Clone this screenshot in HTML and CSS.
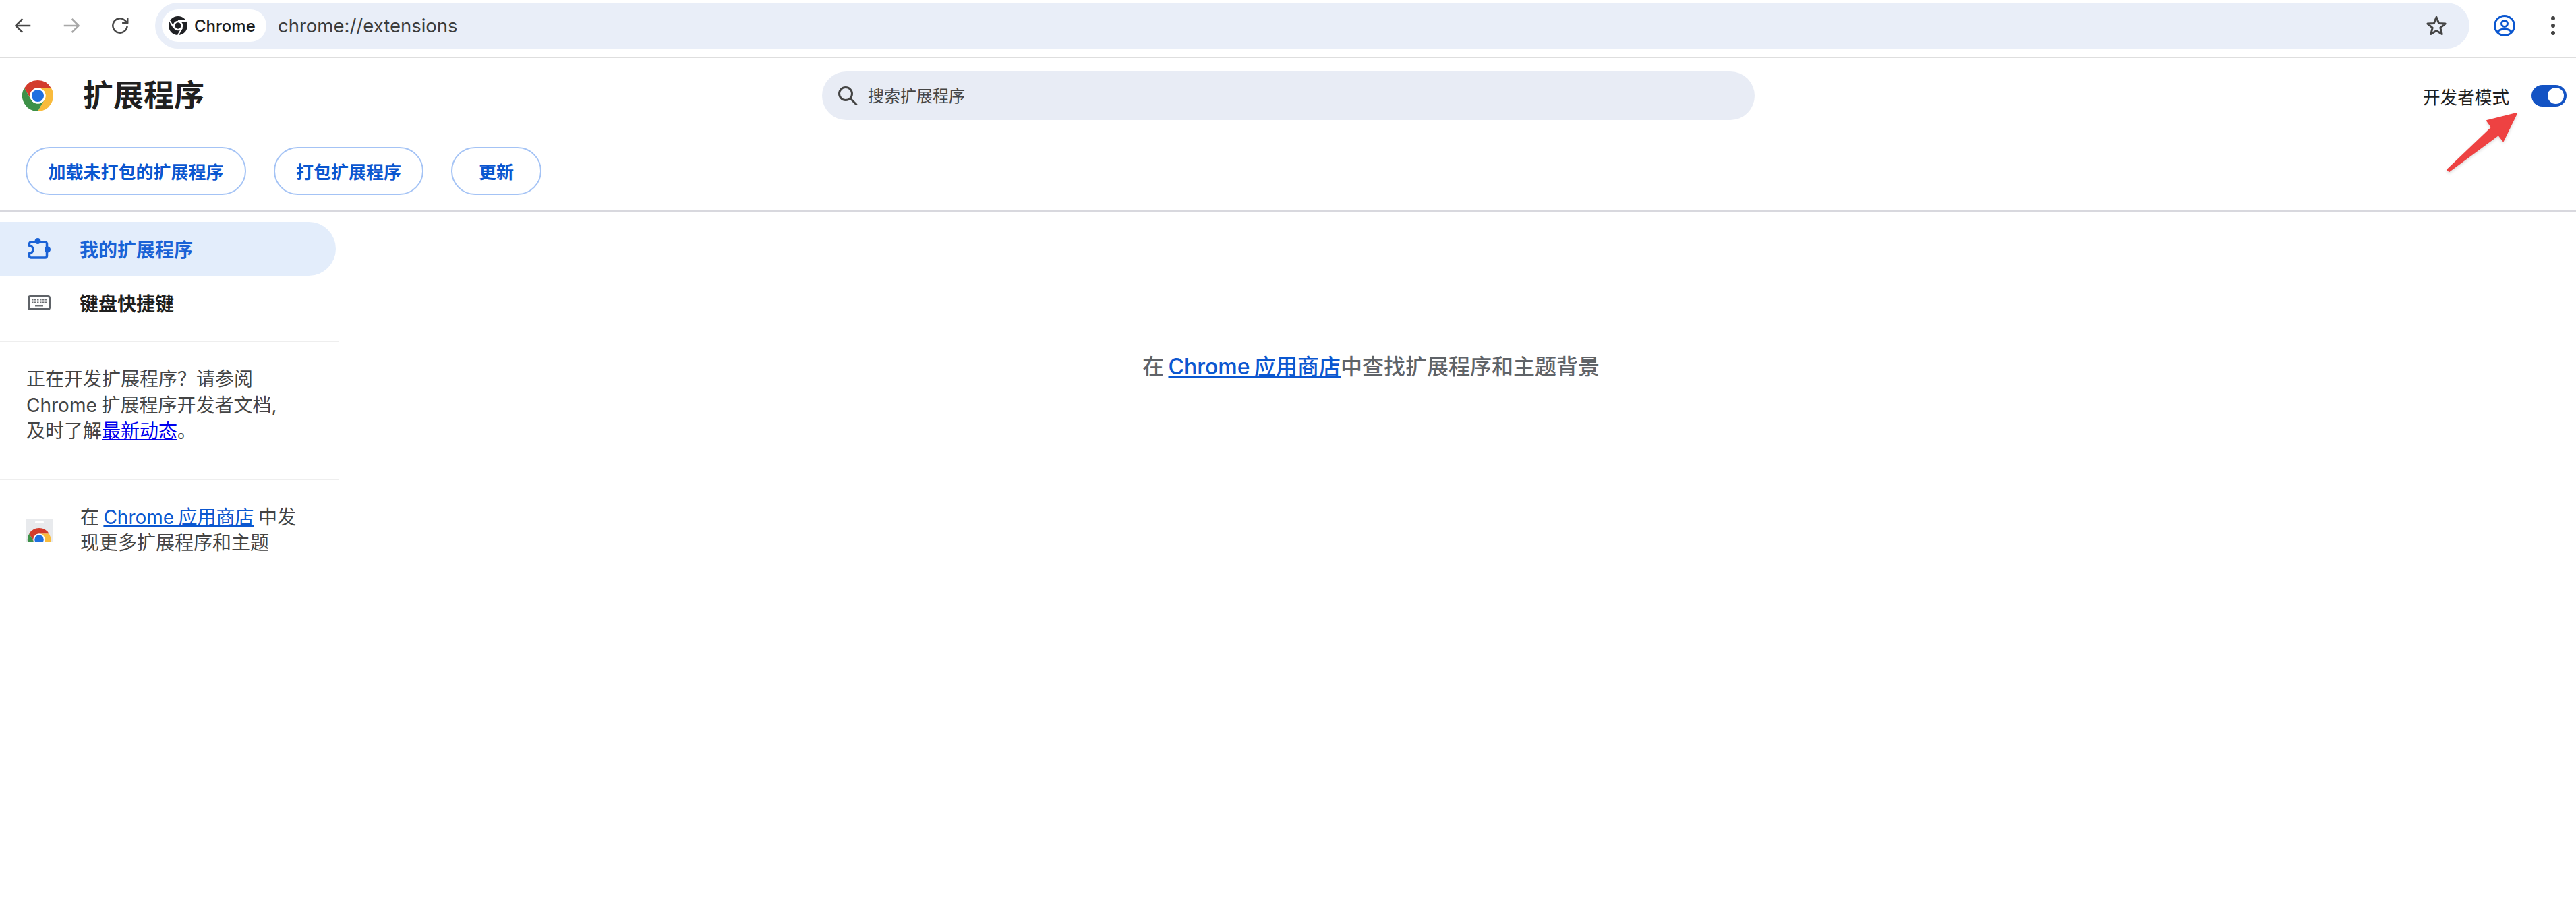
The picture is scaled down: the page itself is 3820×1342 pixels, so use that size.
FILE: index.html
```html
<!DOCTYPE html>
<html lang="zh-CN">
<head>
<meta charset="utf-8">
<title>扩展程序</title>
<link rel="stylesheet" href="styles.css">
</head>
<body>
<svg class="defs" width="0" height="0" aria-hidden="true">
  <defs>
    <g id="chrome-logo">
      <path fill="#d33b2c" d="M24 0A24 24 0 0 0 3.2 12L13.6 30A12 12 0 0 1 24 12H44.8A24 24 0 0 0 24 0Z"/>
      <path fill="#f9bb3c" d="M24 12H44.8A24 24 0 0 1 24 48L34.4 30A12 12 0 0 0 24 12Z"/>
      <path fill="#3d9148" d="M3.2 12L13.6 30A12 12 0 0 0 34.4 30L24 48A24 24 0 0 1 3.2 12Z"/>
      <circle cx="24" cy="24" r="12" fill="#fff"/>
      <circle cx="24" cy="24" r="9.5" fill="#1f6fe0"/>
    </g>
  </defs>
</svg>

<header class="toolbar">
  <svg class="tool-icon" viewBox="0 0 24 24"><path class="stroke-dark" d="M21 12H4M11.500 4 3.500 12l8 8"/></svg>
  <svg class="tool-icon" viewBox="0 0 24 24"><path class="stroke-muted" d="M3 12H20M12.500 4l8 8-8 8"/></svg>
  <svg class="tool-icon" viewBox="0 0 24 24"><path class="stroke-dark" d="M20.500 12A8.500 8.500 0 1 1 17.500 5.500L21 9M21 2.500V9H14.500"/></svg>
  <div class="omnibox">
    <div class="chip">
      <svg class="chip-logo" viewBox="0 0 48 48"><circle cx="24" cy="24" r="24" fill="#202124"/><path fill="none" stroke="#fff" stroke-width="3.500" d="M24 12H46M13.600 30 3 12M34.400 30 24 48"/><circle cx="24" cy="24" r="12.500" fill="#fff"/><circle cx="24" cy="24" r="8" fill="#202124"/></svg>
      <span>Chrome</span>
    </div>
    <span class="url">chrome://extensions</span>
    <svg class="star" viewBox="0 0 32 32"><path d="M16 3.500 19.600 12.400 29.200 13.100 21.800 19.200 24.200 28.500 16 23.400 7.800 28.500 10.200 19.200 2.800 13.100 12.400 12.400Z"/></svg>
  </div>
  <svg class="profile" viewBox="0 0 32 32"><circle class="ring" cx="16" cy="16" r="14.500"/><circle class="ring" cx="16" cy="13" r="4.500"/><path class="ring" d="M5.500 25.500C8 22.300 11.500 21 16 21s8 1.300 10.500 4.500"/></svg>
  <div class="kebab"><i></i><i></i><i></i></div>
</header>

<section class="page-head">
  <div class="title-row">
    <div class="brand">
      <svg class="brand-logo" viewBox="0 0 48 48"><use href="#chrome-logo"/></svg>
      <h1>扩展程序</h1>
    </div>
    <div class="search">
      <svg class="search-icon" viewBox="0 0 30 30"><circle cx="12" cy="12" r="9.500"/><path d="M19 19 28.500 28.500"/></svg>
      <span>搜索扩展程序</span>
    </div>
    <div class="dev-mode">
      <span>开发者模式</span>
      <div class="toggle"><i></i></div>
    </div>
  </div>
  <div class="actions">
    <button class="pill pill-load">加载未打包的扩展程序</button>
    <button class="pill pill-pack">打包扩展程序</button>
    <button class="pill pill-update">更新</button>
  </div>
</section>

<div class="body-grid">
  <aside class="sidebar">
    <nav class="nav">
      <a class="nav-item active">
        <svg class="nav-icon" viewBox="0 0 34 34"><circle class="tab" cx="15" cy="5.500" r="4.500"/><circle class="tab" cx="29.500" cy="18" r="4.500"/><path d="M5 7H26a2.500 2.500 0 0 1 2.500 2.500V27.500a2.500 2.500 0 0 1-2.500 2.500H5a2.500 2.500 0 0 1-2.500-2.500V23.500A5.500 5.500 0 0 0 2.500 12.500V9.500A2.500 2.500 0 0 1 5 7Z"/></svg>
        <span>我的扩展程序</span>
      </a>
      <a class="nav-item">
        <svg class="kbd-icon" viewBox="0 0 34 22"><rect x="1.500" y="1.500" width="31" height="19" rx="2.500" class="kbd-frame"/><path class="kbd-keys" d="M6 5h2.500v2.500H6zM10 5h2.500v2.500H10zM14 5h2.500v2.500H14zM18 5h2.500v2.500H18zM22 5h2.500v2.500H22zM26 5h2.500v2.500H26zM6 9.500h2.500V12H6zM10 9.500h2.500V12H10zM14 9.500h2.500V12H14zM18 9.500h2.500V12H18zM22 9.500h2.500V12H22zM26 9.500h2.500V12H26zM11 14h12v2.500H11z"/></svg>
        <span>键盘快捷键</span>
      </a>
    </nav>
    <p class="dev-note">正在开发扩展程序？请参阅<br>Chrome 扩展程序开发者文档,<br>及时了解<a class="note-link">最新动态</a>。</p>
    <div class="promo">
      <svg class="store-icon" viewBox="0 0 39 34"><rect width="39" height="34" fill="#e8eaed"/><rect x="13" y="4" width="13" height="3" rx="1" fill="#fff"/><g transform="translate(2 14) scale(.71)"><use href="#chrome-logo"/></g></svg>
      <p>在 <a class="link">Chrome 应用商店</a> 中发<br>现更多扩展程序和主题</p>
    </div>
  </aside>
  <main class="main">
    <p class="empty">在 <a class="link">Chrome 应用商店</a>中查找扩展程序和主题背景</p>
  </main>
</div>

<svg class="arrow" viewBox="0 0 114 94"><path d="M5 86 71 23 64 13 108 2 88 43 81 34 8 88Z"/></svg>
</body>
</html>
```

FILE: styles.css
```css
* { box-sizing: border-box; }
html, body { margin: 0; padding: 0; }
body {
  position: relative;
  width: 3820px;
  height: 1342px;
  overflow: hidden;
  background: #fff;
  color: #1f1f1f;
  font-family: Inter, "Noto Sans CJK SC", "Noto Sans", sans-serif;
}
.defs { position: absolute; }

.toolbar {
  display: flex;
  align-items: center;
  height: 86px;
  padding: 0 0 8px 12px;
  border-bottom: 2px solid #dedede;
}
.tool-icon { width: 44px; height: 30px; margin-right: 28px; flex: none; }
.tool-icon path { fill: none; stroke-width: 2; stroke-linejoin: round; }
.stroke-dark { stroke: #474747; }
.stroke-muted { stroke: #a8a8a8; }
.omnibox {
  display: flex;
  align-items: center;
  width: 3432px;
  height: 68px;
  margin-left: 2px;
  padding: 0 33px 0 10px;
  border-radius: 34px;
  background: #e9eef8;
}
.chip {
  display: flex;
  align-items: center;
  gap: 10px;
  height: 48px;
  width: 155px;
  padding-left: 10px;
  border-radius: 24px;
  background: #fff;
  font-size: 24px;
  font-weight: 500;
  color: #1f1f1f;
}
.chip-logo { width: 28px; height: 28px; flex: none; }
.url {
  margin-left: 17px;
  font-size: 27.500px;
  color: #3c3c3c;
}
.star { width: 32px; height: 32px; margin-left: auto; }
.star path { fill: none; stroke: #444; stroke-width: 3; stroke-linejoin: round; }
.profile { width: 32px; height: 32px; margin-left: 36px; flex: none; }
.ring { fill: none; stroke: #0b57d0; stroke-width: 3; }
.kebab {
  display: flex;
  flex-direction: column;
  gap: 5px;
  margin-left: 53px;
}
.kebab i { display: block; width: 6px; height: 6px; border-radius: 50%; background: #444; }

.page-head { height: 228px; border-bottom: 2px solid #d8d8de; }
.title-row {
  display: grid;
  grid-template-columns: 1219px 1383px 1fr;
  align-items: center;
  height: 112px;
}
.brand { display: flex; align-items: center; padding-left: 33px; }
.brand-logo { width: 46px; height: 46px; flex: none; }
h1 {
  margin: 0 0 0 44px;
  font-size: 45px;
  line-height: 56px;
  font-weight: 600;
  color: #1f1f1f;
}
.search {
  display: flex;
  align-items: center;
  height: 72px;
  padding: 0 0 0 23px;
  border-radius: 36px;
  background: #e8ecf5;
  font-size: 24px;
  color: #444;
}
.search span { margin-bottom: 3px; }
.search-icon { width: 30px; height: 30px; margin-right: 15px; flex: none; }
.search-icon circle, .search-icon path { fill: none; stroke: #444; stroke-width: 3; }
.dev-mode {
  display: flex;
  align-items: center;
  justify-content: flex-end;
  padding-right: 14px;
  font-size: 25.600px;
  color: #1f1f1f;
}
.toggle {
  display: flex;
  align-items: center;
  justify-content: flex-end;
  width: 52px;
  height: 32px;
  margin-left: 33px;
  padding-right: 4px;
  border-radius: 16px;
  background: #1353c4;
}
.toggle i { display: block; width: 24px; height: 24px; border-radius: 50%; background: #fff; }

.actions { display: flex; gap: 41px; padding: 20px 0 0 38px; }
.pill {
  height: 71px;
  padding: 0;
  border: 2px solid #a4c3f5;
  border-radius: 36px;
  background: #fff;
  color: #0b57d0;
  font-family: inherit;
  font-size: 26px;
  font-weight: 600;
}
.pill-load { width: 327px; }
.pill-pack { width: 222px; }
.pill-update { width: 134px; }

.body-grid { display: grid; grid-template-columns: 502px 1fr; }
.sidebar { padding-top: 15px; }
.nav { padding-bottom: 16px; border-bottom: 2px solid #eee; }
.nav-item {
  display: flex;
  align-items: center;
  width: 498px;
  height: 80px;
  padding-left: 41px;
  border-radius: 0 40px 40px 0;
  font-size: 28px;
  font-weight: 600;
  color: #1f1f1f;
}
.nav-item.active { background: #e3edfb; color: #1a62d6; }
.nav-icon { width: 34px; height: 34px; margin-right: 43px; flex: none; overflow: visible; }
.nav-icon path { fill: none; stroke: #1a62d6; stroke-width: 3.500; stroke-linejoin: round; }
.nav-icon .tab { fill: #1a62d6; }
.kbd-icon { width: 34px; height: 22px; margin-right: 43px; flex: none; }
.kbd-frame { fill: none; stroke: #5f6368; stroke-width: 3; }
.kbd-keys { fill: #6f7276; }

.dev-note {
  margin: 0;
  padding: 36px 0 51px 39px;
  border-bottom: 2px solid #eee;
  font-size: 28px;
  line-height: 38.500px;
  word-spacing: -1px;
  color: #444;
}
.note-link { color: #0000ee; text-decoration: underline; }
.link { color: #0b57d0; text-decoration: underline; }
.promo {
  display: flex;
  align-items: center;
  padding: 36px 0 0 39px;
}
.promo p { margin: 0; font-size: 28px; line-height: 38px; word-spacing: -1.500px; color: #444; }
.store-icon { width: 39px; height: 34px; margin-right: 41px; flex: none; overflow: hidden; }

.main { padding: 210px 256px 0 0; }
.empty {
  margin: 0;
  font-size: 32px;
  line-height: 40px;
  font-weight: 500;
  word-spacing: -2px;
  text-align: center;
  color: #5f6368;
}

.arrow { position: absolute; left: 3624px; top: 166px; width: 114px; height: 94px; filter: drop-shadow(0 2px 2px rgba(0,0,0,.15)); }
.arrow path { fill: #ee4242; stroke: #ee4242; stroke-width: 2; stroke-linejoin: round; }
```
